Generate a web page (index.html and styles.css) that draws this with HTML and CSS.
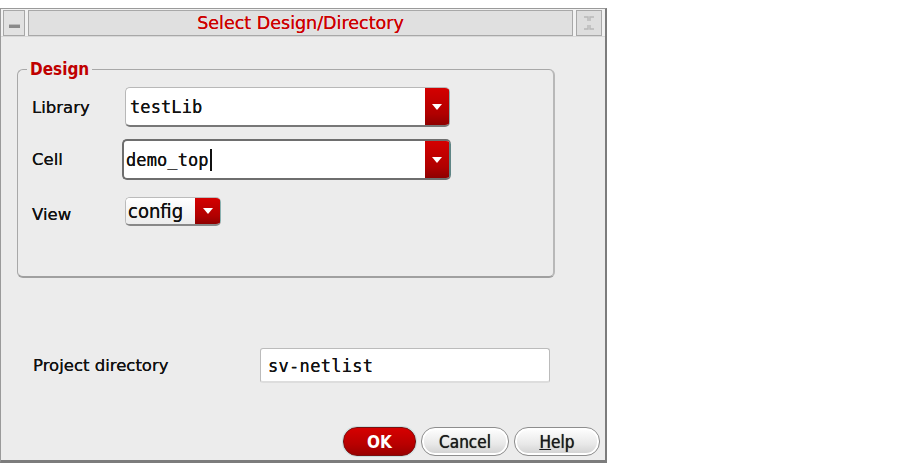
FILE: index.html
```html
<!DOCTYPE html>
<html>
<head>
<meta charset="utf-8">
<link rel="stylesheet" href="styles.css">
</head>
<body>
<div class="window">
  <div class="titlebar">
    <div class="tb-btn tb-left"><span class="minbar"></span></div>
    <div class="tb-title">Select Design/Directory</div>
    <div class="tb-btn tb-right">
      <svg width="14" height="16" viewBox="0 0 14 16"><g fill="none" stroke="#b8b8b8" stroke-width="1.4"><path d="M2 2h4v4M12 2H8v4M2 14h4v-4M12 14H8v-4"/></g></svg>
    </div>
  </div>
  <div class="content">
    <fieldset class="group">
      <legend class="legend">Design</legend>
      <div class="row row-lib">
        <label class="lbl">Library</label>
        <div class="combo combo-wide"><span class="combo-text">testLib</span><span class="combo-btn"><span class="arrow"></span></span></div>
      </div>
      <div class="row row-cell">
        <label class="lbl">Cell</label>
        <div class="combo combo-wide combo-focus"><span class="combo-text">demo_top<span class="caret"></span></span><span class="combo-btn"><span class="arrow"></span></span></div>
      </div>
      <div class="row row-view">
        <label class="lbl lbl-view">View</label>
        <div class="combo combo-small"><span class="combo-text small-text">config</span><span class="combo-btn small-btn"><span class="arrow"></span></span></div>
      </div>
    </fieldset>
    <div class="proj-row">
      <label class="lbl proj-lbl">Project directory</label>
      <div class="field">sv-netlist</div>
    </div>
    <div class="buttons">
      <button class="btn btn-ok">OK</button>
      <button class="btn">Cancel</button>
      <button class="btn"><u>H</u>elp</button>
    </div>
  </div>
</div>
</body>
</html>
```

FILE: styles.css
```css
html, body {
  margin: 0;
  padding: 0;
  background: #ffffff;
}
body {
  font-family: "DejaVu Sans", "Noto Sans", sans-serif;
}
.window {
  margin-top: 8px;
  width: 604px;
  height: 451px;
  border: 1px solid #9a9a9a;
  border-right: 2px solid #7c7c7c;
  border-bottom: 3px solid #7c7c7c;
  background: #ececec;
  box-sizing: content-box;
  display: flex;
  flex-direction: column;
}
.titlebar {
  display: flex;
  height: 26px;
  padding: 1px 3px 0 2px;
  gap: 3px;
  background: #f2f2f2;
  border-bottom: 1px solid #d8d8d8;
}
.tb-btn {
  width: 20px;
  height: 24px;
  border: 1px solid #a8a8a8;
  background: #e2e2e2;
  display: flex;
  align-items: center;
  justify-content: center;
}
.tb-left .minbar {
  display: block;
  width: 11px;
  height: 3px;
  background: #8a8a8a;
  border-top: 1px solid #bbb;
  margin-top: 6px;
}
.tb-right {
  width: 24px;
  background: #dedede;
}
.tb-title {
  flex: 1;
  height: 24px;
  border: 1px solid #a8a8a8;
  background: #e0e0e0;
  color: #cc0000;
  font-family: "DejaVu Sans", sans-serif;
  font-size: 17.5px;
  line-height: 24px;
  text-align: center;
  text-shadow: 0 0 0.6px #cc0000, 0 0 1px #ffffff;
}
.content {
  flex: 1;
  position: relative;
  display: flex;
  flex-direction: column;
  padding: 0 0 0 16px;
}
.group {
  margin: 22px 0 0 0;
  width: 538px;
  height: 219px;
  box-sizing: border-box;
  border: 1px solid #a8a8a8;
  border-right: 2px solid #b8b8b8;
  border-bottom: 2px solid #a0a0a0;
  border-radius: 6px;
  padding: 8px 0 0 14px;
  min-width: 0;
}
.legend {
  color: #c00000;
  font-weight: bold;
  font-size: 17px;
  padding: 0 3px;
  margin-left: -5px;
  font-family: "DejaVu Sans Condensed", "DejaVu Sans", sans-serif;
}
.row {
  display: flex;
  align-items: center;
}
.lbl {
  color: #111;
  font-size: 16.5px;
  font-family: "DejaVu Sans", sans-serif;
  width: 93px;
  flex: none;
  text-shadow: 0 0 0.6px #111;
}
.row-lib { height: 40px; margin-top: 0; }
.row-cell { height: 41px; margin-top: 12px; }
.row-cell .lbl { width: 90px; }
.row-view { height: 30px; margin-top: 15px; }
.lbl-view { padding-top: 8px; }
.combo {
  display: flex;
  height: 100%;
  box-sizing: border-box;
  border: 1px solid #b8b8b8;
  border-bottom: 2px solid #777;
  border-right: none;
  border-radius: 5px;
  background: #fff;
  overflow: hidden;
}
.combo-wide { width: 325px; }
.combo-focus {
  width: 329px;
  border: 2px solid #6e6e6e;
  border-right: none;
}
.combo-focus .combo-btn {
  border-right: 2px solid #5f8585;
}
.combo-text {
  flex: 1;
  font-family: "DejaVu Sans Mono", monospace;
  font-size: 17px;
  color: #111;
  padding-left: 4px;
  display: flex;
  align-items: center;
  letter-spacing: 0.1px;
  text-shadow: 0 0 0.6px #111;
}
.combo-focus .combo-text { padding-left: 2px; }
.caret {
  display: inline-block;
  width: 2px;
  height: 22px;
  background: #111;
  margin-left: 1px;
}
.combo-btn {
  width: 24px;
  flex: none;
  background: linear-gradient(#d40000, #b00000 70%, #8e0000);
  display: flex;
  align-items: center;
  justify-content: center;
  border-right: 1px solid #8ab0b0;
}
.arrow {
  width: 0;
  height: 0;
  border-left: 5px solid transparent;
  border-right: 5px solid transparent;
  border-top: 6px solid #fff;
}
.combo-small {
  width: 96px;
  height: 29px;
  border: 1px solid #bbb;
  border-bottom: 2px solid #888;
  border-right: none;
  border-radius: 5px;
  margin-left: 0;
  margin-top: 2px;
}
.small-text {
  font-family: "DejaVu Sans Condensed", "DejaVu Sans", sans-serif;
  font-size: 20px;
  padding-left: 2px;
  letter-spacing: 0;
  background: linear-gradient(#ffffff, #ececec);
  color: #111;
}
.small-btn { width: 25px; }
.proj-row {
  display: flex;
  align-items: center;
  margin-top: 70px;
  padding-left: 16px;
}
.proj-lbl { width: 227px; }
.field {
  width: 290px;
  height: 35px;
  box-sizing: border-box;
  border: 1px solid #bbb;
  border-bottom: 2px solid #ddd;
  border-radius: 3px;
  background: #fff;
  font-family: "DejaVu Sans Mono", monospace;
  font-size: 17px;
  line-height: 34px;
  padding-left: 7px;
  letter-spacing: 0.3px;
  color: #111;
  text-shadow: 0 0 0.6px #111;
}
.buttons {
  display: flex;
  justify-content: flex-end;
  gap: 5px;
  margin-top: 44px;
  padding-right: 5px;
}
.btn {
  height: 29px;
  border-radius: 14px;
  border: 1px solid #8e8e8e;
  background: linear-gradient(#ffffff, #e8e8e8 60%, #cfcfcf);
  font-family: "DejaVu Sans Condensed", "DejaVu Sans", sans-serif;
  font-size: 17px;
  color: #1a1a1a;
  padding: 0;
  width: 88px;
  box-shadow: inset 0 0 0 2px #fff;
  text-shadow: 0 0 0.7px #222;
}
.btn-ok {
  width: 73px;
  background: linear-gradient(#d60000, #b80000 60%, #9a0000);
  border-color: #7a1010;
  color: #fff;
  font-weight: bold;
  box-shadow: 0 0 0 1px #c8dede;
  text-shadow: none;
}
.btn:last-child { width: 86px; }
```
